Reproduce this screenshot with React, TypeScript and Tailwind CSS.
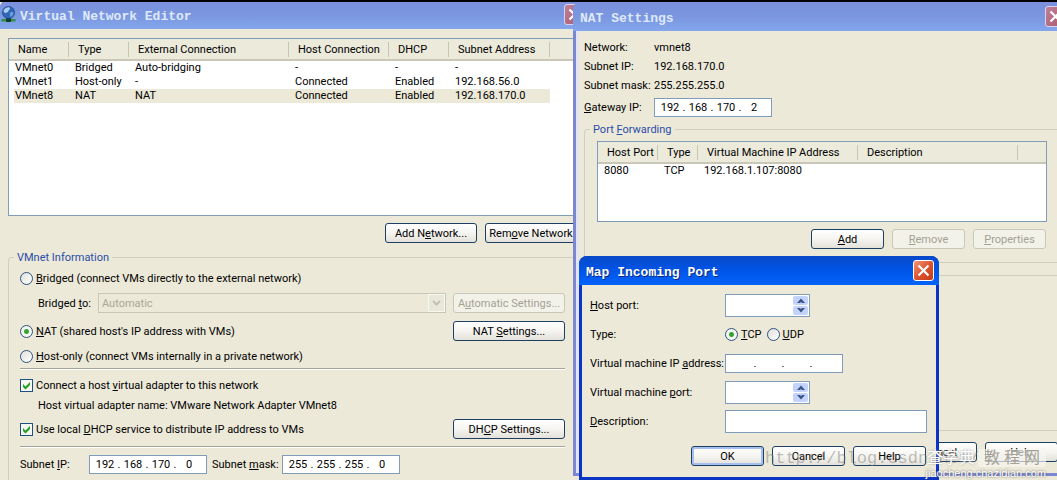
import React from 'react';
import clsx from 'clsx';

interface WindowProps {
  title: string;
  icon?: React.ReactNode;
  active?: boolean;
  className?: string;
  children: React.ReactNode;
}

function XpWindow({ title, icon, active = false, className, children }: WindowProps) {
  return (
    <section
      aria-label={title}
      className={clsx(
        'absolute flex flex-col overflow-hidden rounded-t-lg',
        active ? 'bg-[#0a35c4]' : 'bg-[#7b87cf]',
        className,
      )}
    >
      <header
        className={clsx(
          'flex h-[29px] shrink-0 items-center gap-1 pr-[5px] pl-[7px]',
          active
            ? 'bg-linear-to-b from-[#0848c8] via-[#0055e8] to-[#0463fb]'
            : 'bg-linear-to-b from-[#7b90dc] via-[#7a96df] to-[#84a6ec]',
        )}
      >
        {icon}
        <h2
          className={clsx(
            'flex-1 truncate pt-[3px] font-["Liberation_Mono",monospace] text-[13px] font-bold',
            active ? 'text-white [text-shadow:1px_1px_#0a2a80]' : 'text-[#dfe9fb]',
          )}
        >
          {title}
        </h2>
        <button
          type="button"
          aria-label="Close"
          className={clsx(
            'flex size-[21px] items-center justify-center rounded-[3px] border',
            active
              ? 'border-white bg-linear-to-br from-[#ee9478] via-[#dd5330] to-[#c53c16]'
              : 'border-[#d5d5f0] bg-linear-to-br from-[#c08099] to-[#a9596f]',
          )}
        >
          <svg viewBox="0 0 13 13" className="size-[13px]" fill="none" stroke="white" strokeWidth="2.2">
            <path d="M1.5 1.5l10 10M11.5 1.5l-10 10" />
          </svg>
        </button>
      </header>
      {children}
    </section>
  );
}

function GlobeIcon() {
  return (
    <svg viewBox="0 0 15 17" className="-ml-[6px] h-[17px] w-[15px]" aria-hidden="true">
      <rect x="0.5" y="13" width="14" height="2.5" fill="#2f8f4a" />
      <rect x="5" y="12" width="5" height="4" fill="#17402c" />
      <circle cx="7.5" cy="6.5" r="6.1" fill="#2f66b5" stroke="#1c3f82" strokeWidth="0.6" />
      <path d="M2.5 4.5Q4.5 1.2 8 1.3Q10 2.5 8 4Q7.5 6.5 4.5 7Q2.5 6.5 2.5 4.5z" fill="#a9cdf0" />
      <path d="M9.5 6Q12 5.5 12.6 7Q12 10 9.5 11Q8.3 8.5 9.5 6z" fill="#6ba0de" />
    </svg>
  );
}

interface PushButtonProps {
  children: React.ReactNode;
  disabled?: boolean;
  primary?: boolean;
  className?: string;
}

function PushButton({ children, disabled, primary, className = 'w-[73px]' }: PushButtonProps) {
  return (
    <button
      type="button"
      disabled={disabled}
      className={clsx(
        'h-5 shrink-0 rounded-[3px] border text-center whitespace-nowrap',
        disabled
          ? 'border-[#c9c7ba] bg-[#f3f2e9] text-[#a3a194]'
          : 'border-[#1c4064] bg-linear-to-b from-white via-[#f5f4f0] to-[#e4e1da] text-black',
        primary && 'shadow-[inset_0_0_0_2px_#a5c0ee]',
        className,
      )}
    >
      {children}
    </button>
  );
}

function Radio({ name, defaultChecked, children }: { name: string; defaultChecked?: boolean; children: React.ReactNode }) {
  return (
    <label className="flex items-center gap-[3px] whitespace-nowrap">
      <input
        type="radio"
        name={name}
        defaultChecked={defaultChecked}
        className="size-[13px] shrink-0 appearance-none rounded-full border border-[#2c5280] bg-linear-to-br from-[#e0e0dc] to-white checked:bg-[radial-gradient(circle,#2fa02f_0,#35a635_2px,#f4f6f2_3px)]"
      />
      <span>{children}</span>
    </label>
  );
}

function Checkbox({ children }: { children: React.ReactNode }) {
  return (
    <label className="flex items-center gap-[3px] whitespace-nowrap">
      <span className="relative size-[13px] shrink-0">
        <input
          type="checkbox"
          defaultChecked
          className="peer block size-[13px] appearance-none border border-[#1c5180] bg-[#f6f6f3]"
        />
        <svg
          viewBox="0 0 13 13"
          className="pointer-events-none absolute inset-0 hidden size-[13px] peer-checked:block"
        >
          <path d="M3 5v3l2.5 2.5L10 6V3L5.5 7.5z" fill="#21a121" />
        </svg>
      </span>
      <span>{children}</span>
    </label>
  );
}

function IpField({ id, label, octets }: { id: string; label: string; octets: string[] }) {
  return (
    <div
      role="group"
      aria-label={label}
      className="flex h-[19px] w-[118px] shrink-0 items-center border border-[#7f9db9] bg-white pl-[3px]"
    >
      {octets.map((octet, i) => (
        <React.Fragment key={i}>
          {i > 0 && <span className="w-1 text-center">.</span>}
          <input
            id={i === 0 ? id : undefined}
            aria-label={`${label} octet ${i + 1}`}
            defaultValue={octet}
            className="w-6 bg-transparent text-center outline-none"
          />
        </React.Fragment>
      ))}
    </div>
  );
}

function SpinField({ id }: { id: string }) {
  return (
    <div className="flex h-[23px] w-[85px] border border-[#7f9db9] bg-white p-px">
      <input id={id} type="text" className="min-w-0 flex-1 px-1 outline-none" />
      <div className="flex w-[15px] flex-col gap-px">
        <button type="button" aria-label="Increase" className="flex flex-1 items-center justify-center rounded-[2px] bg-[#c3d3fb]">
          <svg viewBox="0 0 8 5" className="h-[5px] w-2"><path d="M0 5L4 0.5L8 5H5L4 4L3 5z" fill="#3b5488" /></svg>
        </button>
        <button type="button" aria-label="Decrease" className="flex flex-1 items-center justify-center rounded-[2px] bg-[#c3d3fb]">
          <svg viewBox="0 0 8 5" className="h-[5px] w-2"><path d="M0 0L4 4.5L8 0H5L4 1L3 0z" fill="#3b5488" /></svg>
        </button>
      </div>
    </div>
  );
}

interface ListViewProps {
  columns: { title: string; width: string }[];
  rows: string[][];
  selected?: number;
  className?: string;
}

function ListView({ columns, rows, selected, className }: ListViewProps) {
  return (
    <div className={clsx('overflow-hidden border border-[#7f9db9] bg-white', className)}>
      <table className="w-full table-fixed border-separate border-spacing-0 text-left">
        <thead>
          <tr className="h-[22px] bg-[#ebeadb]">
            {columns.map((col) => (
              <th key={col.title} className={clsx('border-b-2 border-[#cbc7b8] p-0 font-normal', col.width)}>
                <div className="h-[15px] border-r border-[#c7c5b2] pl-[9px] whitespace-nowrap">
                  {col.title}
                </div>
              </th>
            ))}
            <th className="border-b-2 border-[#cbc7b8] p-0" />
          </tr>
        </thead>
        <tbody>
          {rows.map((row, r) => (
            <tr key={r} className="h-[14px]">
              {row.map((cell, c) => (
                <td
                  key={c}
                  className={clsx(
                    'p-0 pl-[6px] leading-[14px] whitespace-nowrap first:border-l-[5px] first:border-white first:pl-px',
                    r === selected && 'bg-[#ece9d8]',
                  )}
                >
                  {cell}
                </td>
              ))}
              <td />
            </tr>
          ))}
        </tbody>
      </table>
    </div>
  );
}

const networkColumns = [
  { title: 'Name', width: 'w-[60px]' },
  { title: 'Type', width: 'w-[60px]' },
  { title: 'External Connection', width: 'w-[160px]' },
  { title: 'Host Connection', width: 'w-[100px]' },
  { title: 'DHCP', width: 'w-[60px]' },
  { title: 'Subnet Address', width: 'w-[101px]' },
];

const networks = [
  ['VMnet0', 'Bridged', 'Auto-bridging', '-', '-', '-'],
  ['VMnet1', 'Host-only', '-', 'Connected', 'Enabled', '192.168.56.0'],
  ['VMnet8', 'NAT', 'NAT', 'Connected', 'Enabled', '192.168.170.0'],
];

const forwardColumns = [
  { title: 'Host Port', width: 'w-[60px]' },
  { title: 'Type', width: 'w-[40px]' },
  { title: 'Virtual Machine IP Address', width: 'w-[160px]' },
  { title: 'Description', width: 'w-[160px]' },
];

const forwards = [['8080', 'TCP', '192.168.1.107:8080', '']];

function NetworkEditor() {
  return (
    <XpWindow title="Virtual Network Editor" icon={<GlobeIcon />} className="top-0 left-0 h-[520px] w-[590px]">
      <div className="flex flex-1 flex-col bg-[#ece9d8] px-2 pt-[9px]">
        <ListView columns={networkColumns} rows={networks} selected={2} className="h-[178px]" />
        <div className="mt-[7px] ml-[377px] flex gap-2">
          <PushButton className="w-[92px]">Add N<u>e</u>twork...</PushButton>
          <PushButton className="w-[92px]">Rem<u>o</u>ve Network</PushButton>
        </div>

        <fieldset className="mt-[7px] flex-1 rounded-[3px] border border-[#d0cebf] pr-4 pl-[11px]">
          <legend className="-ml-[6px] px-[3px] text-[#2a4da8]">VMnet Information</legend>
          <div className="flex h-[26px] items-center">
            <Radio name="mode"><u>B</u>ridged (connect VMs directly to the external network)</Radio>
          </div>
          <div className="flex h-6 items-center">
            <label htmlFor="bridge" className="w-[78px] pl-[18px] whitespace-nowrap">Bridged <u>t</u>o:</label>
            <div className="relative w-[348px]">
              <select
                id="bridge"
                disabled
                className="block h-5 w-full appearance-none border border-[#c9c7ba] bg-[#ece9d8] px-[3px] text-[#a9a799] opacity-100"
              >
                <option>Automatic</option>
              </select>
              <span className="pointer-events-none absolute inset-y-px right-px flex w-[17px] items-center justify-center border border-[#f8f7f0] bg-[#e9e7da]">
                <svg viewBox="0 0 9 6" className="h-[6px] w-[9px]" fill="none" stroke="#c2c0b2" strokeWidth="2">
                  <path d="M1 1l3.5 3.5L8 1" />
                </svg>
              </span>
            </div>
            <PushButton disabled className="ml-[7px] w-[112px]">A<u>u</u>tomatic Settings...</PushButton>
          </div>
          <div className="flex h-8 items-center">
            <div className="w-[433px]">
              <Radio name="mode" defaultChecked><u>N</u>AT (shared host's IP address with VMs)</Radio>
            </div>
            <PushButton className="w-[112px]">NAT <u>S</u>ettings...</PushButton>
          </div>
          <div className="flex h-[18px] items-center">
            <Radio name="mode"><u>H</u>ost-only (connect VMs internally in a private network)</Radio>
          </div>
          <hr className="mt-[3px] w-[545px] border-t border-b border-t-[#a5a395] border-b-white" />
          <div className="flex h-[30px] items-center">
            <Checkbox>Connect a host <u>v</u>irtual adapter to this network</Checkbox>
          </div>
          <p className="pl-[18px] leading-3">Host virtual adapter name: VMware Network Adapter VMnet8</p>
          <div className="flex h-[34px] items-center">
            <div className="w-[433px]">
              <Checkbox>Use local <u>D</u>HCP service to distribute IP address to VMs</Checkbox>
            </div>
            <PushButton className="w-[112px]">DH<u>C</u>P Settings...</PushButton>
          </div>
          <hr className="w-[545px] border-t border-b border-t-[#a5a395] border-b-white" />
          <div className="flex h-8 items-center">
            <label htmlFor="subnet-ip" className="w-[69px]">Subnet <u>I</u>P:</label>
            <IpField id="subnet-ip" label="Subnet IP" octets={['192', '168', '170', '0']} />
            <label htmlFor="subnet-mask" className="w-[75px] pl-[5px] whitespace-nowrap">Subnet <u>m</u>ask:</label>
            <IpField id="subnet-mask" label="Subnet mask" octets={['255', '255', '255', '0']} />
          </div>
        </fieldset>
      </div>
    </XpWindow>
  );
}

function NatSettings() {
  return (
    <XpWindow title="NAT Settings" className="top-[2px] left-[573px] h-[474px] w-[498px]">
      <div className="mx-[3px] mb-[3px] flex flex-1 flex-col border-l-[3px] border-[#e3e4f0] bg-[#ece9d8] pt-[7px] pl-[5px]">
        <dl className="grid grid-cols-[70px_1fr] leading-[19px]">
          <dt>Network:</dt>
          <dd>vmnet8</dd>
          <dt>Subnet IP:</dt>
          <dd>192.168.170.0</dd>
          <dt className="whitespace-nowrap">Subnet mask:</dt>
          <dd>255.255.255.0</dd>
        </dl>
        <div className="flex h-6 items-center">
          <label htmlFor="gateway" className="w-[70px]"><u>G</u>ateway IP:</label>
          <IpField id="gateway" label="Gateway IP" octets={['192', '168', '170', '2']} />
        </div>

        <fieldset className="mt-[3px] h-[141px] shrink-0 rounded-[3px] border border-[#d0cebf] pl-3">
          <legend className="-ml-[7px] px-[3px] text-[#2a4da8]">Port <u>F</u>orwarding</legend>
          <ListView columns={forwardColumns} rows={forwards} className="mt-1 h-[81px] w-[450px]" />
          <div className="mt-[7px] flex w-[449px] justify-end gap-2">
            <PushButton><u>A</u>dd</PushButton>
            <PushButton disabled><u>R</u>emove</PushButton>
            <PushButton disabled><u>P</u>roperties</PushButton>
          </div>
        </fieldset>
        <div className="mt-3 h-[156px] shrink-0 rounded-[3px] border border-[#d0cebf]" />
        <div className="mt-[11px] flex justify-end gap-2 pr-[10px]">
          <PushButton>Cancel</PushButton>
          <PushButton>Help</PushButton>
        </div>
      </div>
    </XpWindow>
  );
}

function MapIncomingPort() {
  return (
    <XpWindow title="Map Incoming Port" active className="top-[256px] left-[579px] h-[224px] w-[360px]">
      <form className="mx-[3px] mb-[3px] flex-1 bg-[#ece9d8] pt-[6px] pl-2">
        <div className="grid auto-rows-[29px] grid-cols-[135px_1fr] items-center">
          <label htmlFor="host-port"><u>H</u>ost port:</label>
          <SpinField id="host-port" />
          <span>Type:</span>
          <div className="flex gap-[5px]">
            <Radio name="protocol" defaultChecked><u>T</u>CP</Radio>
            <Radio name="protocol"><u>U</u>DP</Radio>
          </div>
          <label htmlFor="vm-ip" className="whitespace-nowrap">Virtual machine IP <u>a</u>ddress:</label>
          <IpField id="vm-ip" label="Virtual machine IP address" octets={['', '', '', '']} />
          <label htmlFor="vm-port">Virtual machine <u>p</u>ort:</label>
          <SpinField id="vm-port" />
          <label htmlFor="description"><u>D</u>escription:</label>
          <input id="description" type="text" className="h-[23px] w-[202px] border border-[#7f9db9] bg-white px-1 outline-none" />
        </div>
        <div className="mt-[10px] flex justify-end gap-2 pr-[10px]">
          <PushButton primary>OK</PushButton>
          <PushButton>Cancel</PushButton>
          <PushButton>Help</PushButton>
        </div>
      </form>
    </XpWindow>
  );
}

function Watermarks() {
  return (
    <div className="pointer-events-none">
      <p className="absolute top-[450px] left-[765px] font-['Liberation_Mono',monospace] text-[17px] leading-[18px] whitespace-nowrap text-[#77777777]">
        http://blog.csdn.net/
      </p>
      <div className="absolute top-[449px] left-[924px] w-[122px] text-right font-['Liberation_Sans','Noto_Sans_CJK_SC',sans-serif] text-white">
        <div className="flex items-center justify-end gap-[3px] text-[16px] leading-[18px]">
          <span className="[text-shadow:0_0_2px_#999]">查字典</span>
          <span className="flex gap-1 rounded-[4px] bg-[#f7f6f0aa] px-[6px] text-[#a5a398]">
            <span>教</span>
            <span>程</span>
            <span>网</span>
          </span>
        </div>
        <p className="text-[11px] leading-3 whitespace-nowrap [text-shadow:0_0_2px_#555]">jiaocheng.chazidian.com</p>
      </div>
    </div>
  );
}

export default function App() {
  return (
    <main className="relative h-screen w-full overflow-hidden border-t-2 border-black bg-[#ece9d8] font-['Roboto',sans-serif] text-[11px] leading-[15px] text-black">
      <div className="absolute inset-x-0 -top-[2px] h-screen">
        <NetworkEditor />
        <NatSettings />
        <MapIncomingPort />
        <Watermarks />
      </div>
    </main>
  );
}
